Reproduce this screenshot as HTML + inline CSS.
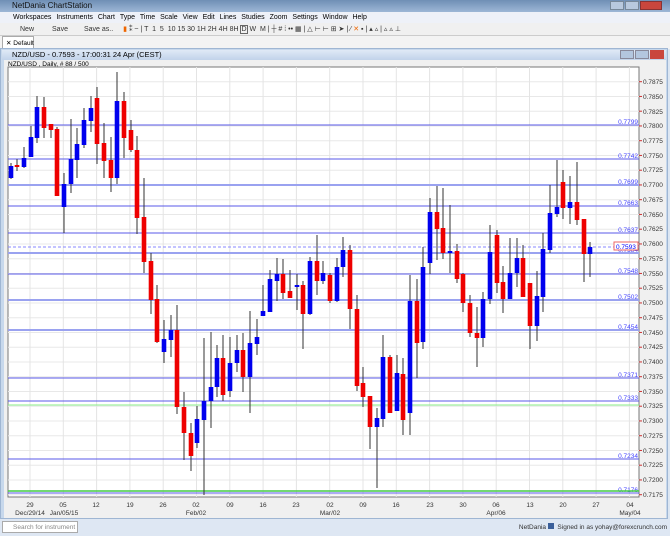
<!DOCTYPE html>
<html><head><meta charset="utf-8"><style>
*{margin:0;padding:0;box-sizing:border-box}
body{width:670px;height:536px;overflow:hidden;background:#dce6f2;font-family:"Liberation Sans",sans-serif;position:relative}
.abs{position:absolute;white-space:nowrap}
#title{left:0;top:0;width:670px;height:12px;background:linear-gradient(#6f8fb5,#9db7d6);font-size:8px;color:#111;padding:1px 0 0 12px}
#menu{left:0;top:12px;width:670px;height:11px;background:#eef1f8;font-size:7px;color:#000;padding:2px 0 0 13px;word-spacing:3px}
#tool{left:0;top:23px;width:670px;height:13px;background:#f0f0f0;font-size:7px;color:#333;padding:2px 0 0 20px;border-bottom:1px solid #ccc}
#tabs{left:0;top:36px;width:670px;height:13px;background:#f3f3f3}
#tab{left:2px;top:36px;width:32px;height:12px;background:#fff;border:1px solid #aaa;border-bottom:none;font-size:6.5px;padding:2px 0 0 3px}
#win{left:0;top:48px;width:668px;height:471px;background:#c7d8ec;border:1px solid #9fb6d3}
#wh{left:2px;top:50px;width:664px;height:10px;background:linear-gradient(#dfe9f6,#c1d3ea);font-size:7.5px;padding:0 0 0 10px}
#chart{left:4px;top:60px;width:662px;height:458px;background:#f0f0f0}
#status{left:0;top:519px;width:670px;height:17px;background:#dee7f3;font-size:6.5px;color:#333}
</style></head><body>
<div id="title" class="abs">NetDania ChartStation
 <span class="abs" style="right:8px;top:1px;width:22px;height:9px;background:#c9463d;border:1px solid #833"></span>
 <span class="abs" style="right:31px;top:1px;width:14px;height:9px;background:#b8c9de;border:1px solid #789"></span>
 <span class="abs" style="right:46px;top:1px;width:14px;height:9px;background:#b8c9de;border:1px solid #789"></span></div>
<div id="menu" class="abs">Workspaces Instruments Chart&#160;Type Time&#160;Scale View Edit Lines Studies Zoom Settings Window Help</div>
<div id="tool" class="abs"><span style="margin-right:18px">New</span><span style="margin-right:16px">Save</span><span style="margin-right:10px">Save as..</span><span style="color:#e60">▮</span> ⁑ ~ | T &nbsp;1 &nbsp;5 &nbsp;10 15 30 1H 2H 4H 8H <span style="border:1px solid #666">D</span> W &nbsp;M | ┼ # ⁞ •• ▦ | △ ⊢ ⊢ ⊞ ➤ | ⁄ <span style="color:#e60">✕</span> ▪ | ▴ ▵ | ▵ ▵ ⊥</div>
<div id="tabs" class="abs"></div>
<div id="tab" class="abs">✕ Default</div>
<div id="win" class="abs"></div>
<div id="wh" class="abs">NZD/USD - 0.7593 - 17:00:31 24 Apr (CEST)
 <span class="abs" style="right:2px;top:0;width:14px;height:9px;background:#c9463d"></span>
 <span class="abs" style="right:17px;top:0;width:14px;height:9px;background:#b3c6de;border:1px solid #889"></span>
 <span class="abs" style="right:32px;top:0;width:14px;height:9px;background:#b3c6de;border:1px solid #889"></span></div>
<div id="chart" class="abs"></div>
<svg class="abs" style="left:0;top:0" width="670" height="536" id="s" font-family="Liberation Sans" font-size="6.5">
<text x="8" y="66" font-size="6.5" fill="#000">NZD/USD , Daily, # 88 / 500</text>
<rect x="8" y="67" width="631" height="430" fill="#fff" stroke="#777"/>
<g id="grid"></g>
<g id="lines"></g>
<g id="candles"></g>
<g fill="#333">
<text x="643" y="84">0.7875</text><text x="643" y="99">0.7850</text><text x="643" y="114">0.7825</text><text x="643" y="128">0.7800</text><text x="643" y="143">0.7775</text><text x="643" y="158">0.7750</text><text x="643" y="172">0.7725</text><text x="643" y="187">0.7700</text><text x="643" y="202">0.7675</text><text x="643" y="217">0.7650</text><text x="643" y="231">0.7625</text><text x="643" y="246">0.7600</text><text x="643" y="261">0.7575</text><text x="643" y="276">0.7550</text><text x="643" y="290">0.7525</text><text x="643" y="305">0.7500</text><text x="643" y="320">0.7475</text><text x="643" y="335">0.7450</text><text x="643" y="349">0.7425</text><text x="643" y="364">0.7400</text><text x="643" y="379">0.7375</text><text x="643" y="394">0.7350</text><text x="643" y="408">0.7325</text><text x="643" y="423">0.7300</text><text x="643" y="438">0.7275</text><text x="643" y="453">0.7250</text><text x="643" y="467">0.7225</text><text x="643" y="482">0.7200</text><text x="643" y="497">0.7175</text>
</g>
<rect x="614" y="242" width="24" height="8" fill="#fff" stroke="#e66"/>
<text x="616" y="249" fill="#00f" font-size="6.5">0.7593</text>
<g fill="#333" text-anchor="middle">
<text x="30" y="507">29</text><text x="63" y="507">05</text><text x="96" y="507">12</text><text x="130" y="507">19</text><text x="163" y="507">26</text><text x="196" y="507">02</text><text x="230" y="507">09</text><text x="263" y="507">16</text><text x="296" y="507">23</text><text x="330" y="507">02</text><text x="363" y="507">09</text><text x="396" y="507">16</text><text x="430" y="507">23</text><text x="463" y="507">30</text><text x="496" y="507">06</text><text x="530" y="507">13</text><text x="563" y="507">20</text><text x="596" y="507">27</text><text x="630" y="507">04</text>
<text x="30" y="515">Dec/29/14</text><text x="64" y="515">Jan/05/15</text><text x="196" y="515">Feb/02</text><text x="330" y="515">Mar/02</text><text x="496" y="515">Apr/06</text><text x="630" y="515">May/04</text>
</g>
</svg>
<div id="status" class="abs">
 <div class="abs" style="left:2px;top:2px;width:76px;height:12px;background:#fff;border:1px solid #aaa;padding:2px 0 0 10px;color:#888">Search for instrument</div>
 <div class="abs" style="right:3px;top:4px">NetDania <span style="display:inline-block;width:6px;height:6px;background:#3a5f9a"></span> &nbsp;Signed in as yohay@forexcrunch.com</div>
</div>
<script>
var NS="http://www.w3.org/2000/svg";
function el(p,t,a){var e=document.createElementNS(NS,t);for(var k in a)e.setAttribute(k,a[k]);document.getElementById(p).appendChild(e);return e;}
for(var i=0;i<29;i++){var y=81.7+i*14.75;el("grid","line",{x1:8,x2:639,y1:y,y2:y,stroke:"#e8e8e8"});el("grid","line",{x1:639,x2:642,y1:y,y2:y,stroke:"#c33"});}
for(var k=0;k<19;k++){var x=30+k*33.3;el("grid","line",{x1:x,x2:x,y1:67,y2:497,stroke:"#e4e4e4"});}
var L=[[125,"0.7799",1],[159,"0.7742",1],[185,"0.7699",2],[206,"0.7663",1],[233,"0.7637",1],[253,"0.7584",2],[274,"0.7548",1],[300,"0.7502",2],[330,"0.7454",2],[378,"0.7371",1],[401,"0.7333",1],[459,"0.7234",1],[493,"0.7176",1]];
L.forEach(function(l){el("lines","line",{x1:8,x2:639,y1:l[0],y2:l[0],stroke:l[2]>1?"#9aa2f0":"#5a5ae8","stroke-width":l[2]});var t=el("lines","text",{x:638,y:l[0]-1,"text-anchor":"end",fill:"#44f","font-size":"6.5"});t.textContent=l[1];});
el("lines","line",{x1:8,x2:639,y1:247,y2:247,stroke:"#88f","stroke-dasharray":"3,2"});
el("lines","line",{x1:8,x2:639,y1:405,y2:405,stroke:"#8e8"});
el("lines","line",{x1:8,x2:639,y1:491,y2:491,stroke:"#4c4","stroke-width":1.5});
var C=[[11,"b",166,178,163,179],[17,"r",165,167,159,171],[24,"b",158,167,147,168],[31,"b",137,157,126,157],[37,"b",107,138,96,143],[44,"r",107,128,97,138],[51,"r",124,130,124,138],[57,"r",129,196,127,196],[64,"b",184,207,173,233],[71,"b",159,184,119,193],[77,"b",144,160,128,178],[84,"b",120,145,108,148],[91,"b",108,121,96,132],[97,"r",98,144,87,164],[104,"r",143,161,123,178],[111,"r",160,178,137,192],[117,"b",101,178,72,184],[124,"r",101,138,92,158],[131,"r",130,150,120,152],[137,"r",150,218,136,234],[144,"r",217,262,178,273],[151,"r",261,300,253,314],[157,"r",299,342,285,343],[164,"b",339,352,320,363],[171,"b",330,340,315,357],[177,"r",330,407,305,414],[184,"r",407,433,392,460],[191,"r",433,456,423,471],[197,"b",419,443,406,448],[204,"b",401,420,338,495],[211,"b",387,401,332,428],[217,"b",358,387,345,397],[223,"r",358,395,335,401],[230,"b",363,391,337,397],[237,"b",350,363,335,372],[243,"r",350,377,333,392],[250,"b",343,377,311,413],[257,"b",337,344,319,355],[263,"b",311,316,285,316],[270,"b",279,312,270,312],[277,"b",274,281,258,301],[283,"r",274,293,259,299],[290,"r",291,298,270,298],[297,"b",285,287,274,310],[303,"r",285,314,281,349],[310,"b",261,314,257,315],[317,"r",261,281,235,295],[323,"b",273,281,261,284],[330,"r",275,301,273,303],[337,"b",267,301,258,302],[343,"b",250,267,237,277],[350,"r",250,309,245,329],[357,"r",309,386,295,391],[363,"r",383,397,367,407],[370,"r",396,427,396,449],[377,"b",418,427,408,488],[383,"b",357,419,335,427],[390,"r",357,413,355,413],[397,"b",373,411,355,411],[403,"r",374,420,358,435],[410,"b",301,413,275,435],[417,"r",301,343,279,378],[423,"b",267,342,247,349],[430,"b",212,263,198,274],[437,"r",212,229,186,260],[443,"r",228,253,188,259],[450,"b",251,253,205,273],[457,"r",251,279,244,283],[463,"r",274,303,273,312],[470,"r",303,333,295,337],[477,"r",333,338,307,367],[483,"b",299,338,292,347],[490,"b",252,299,225,304],[497,"r",235,283,230,293],[503,"r",282,299,266,313],[510,"b",273,299,238,299],[517,"b",258,273,238,287],[523,"r",258,297,245,297],[530,"r",283,326,283,349],[537,"b",296,326,271,341],[543,"b",249,297,233,312],[550,"b",213,250,185,253],[557,"b",207,214,160,217],[563,"r",182,208,170,219],[570,"b",202,208,176,224],[577,"r",202,220,162,225],[584,"r",219,254,219,282],[590,"b",247,254,242,277]];
C.forEach(function(c){el("candles","line",{x1:c[0],x2:c[0],y1:c[4],y2:c[5],stroke:"#333","stroke-width":1});el("candles","rect",{x:c[0]-2.3,y:c[2],width:4.6,height:Math.max(c[3]-c[2],2),fill:c[1]=="b"?"#0000ee":"#ee0000"});});
</script>
</body></html>
